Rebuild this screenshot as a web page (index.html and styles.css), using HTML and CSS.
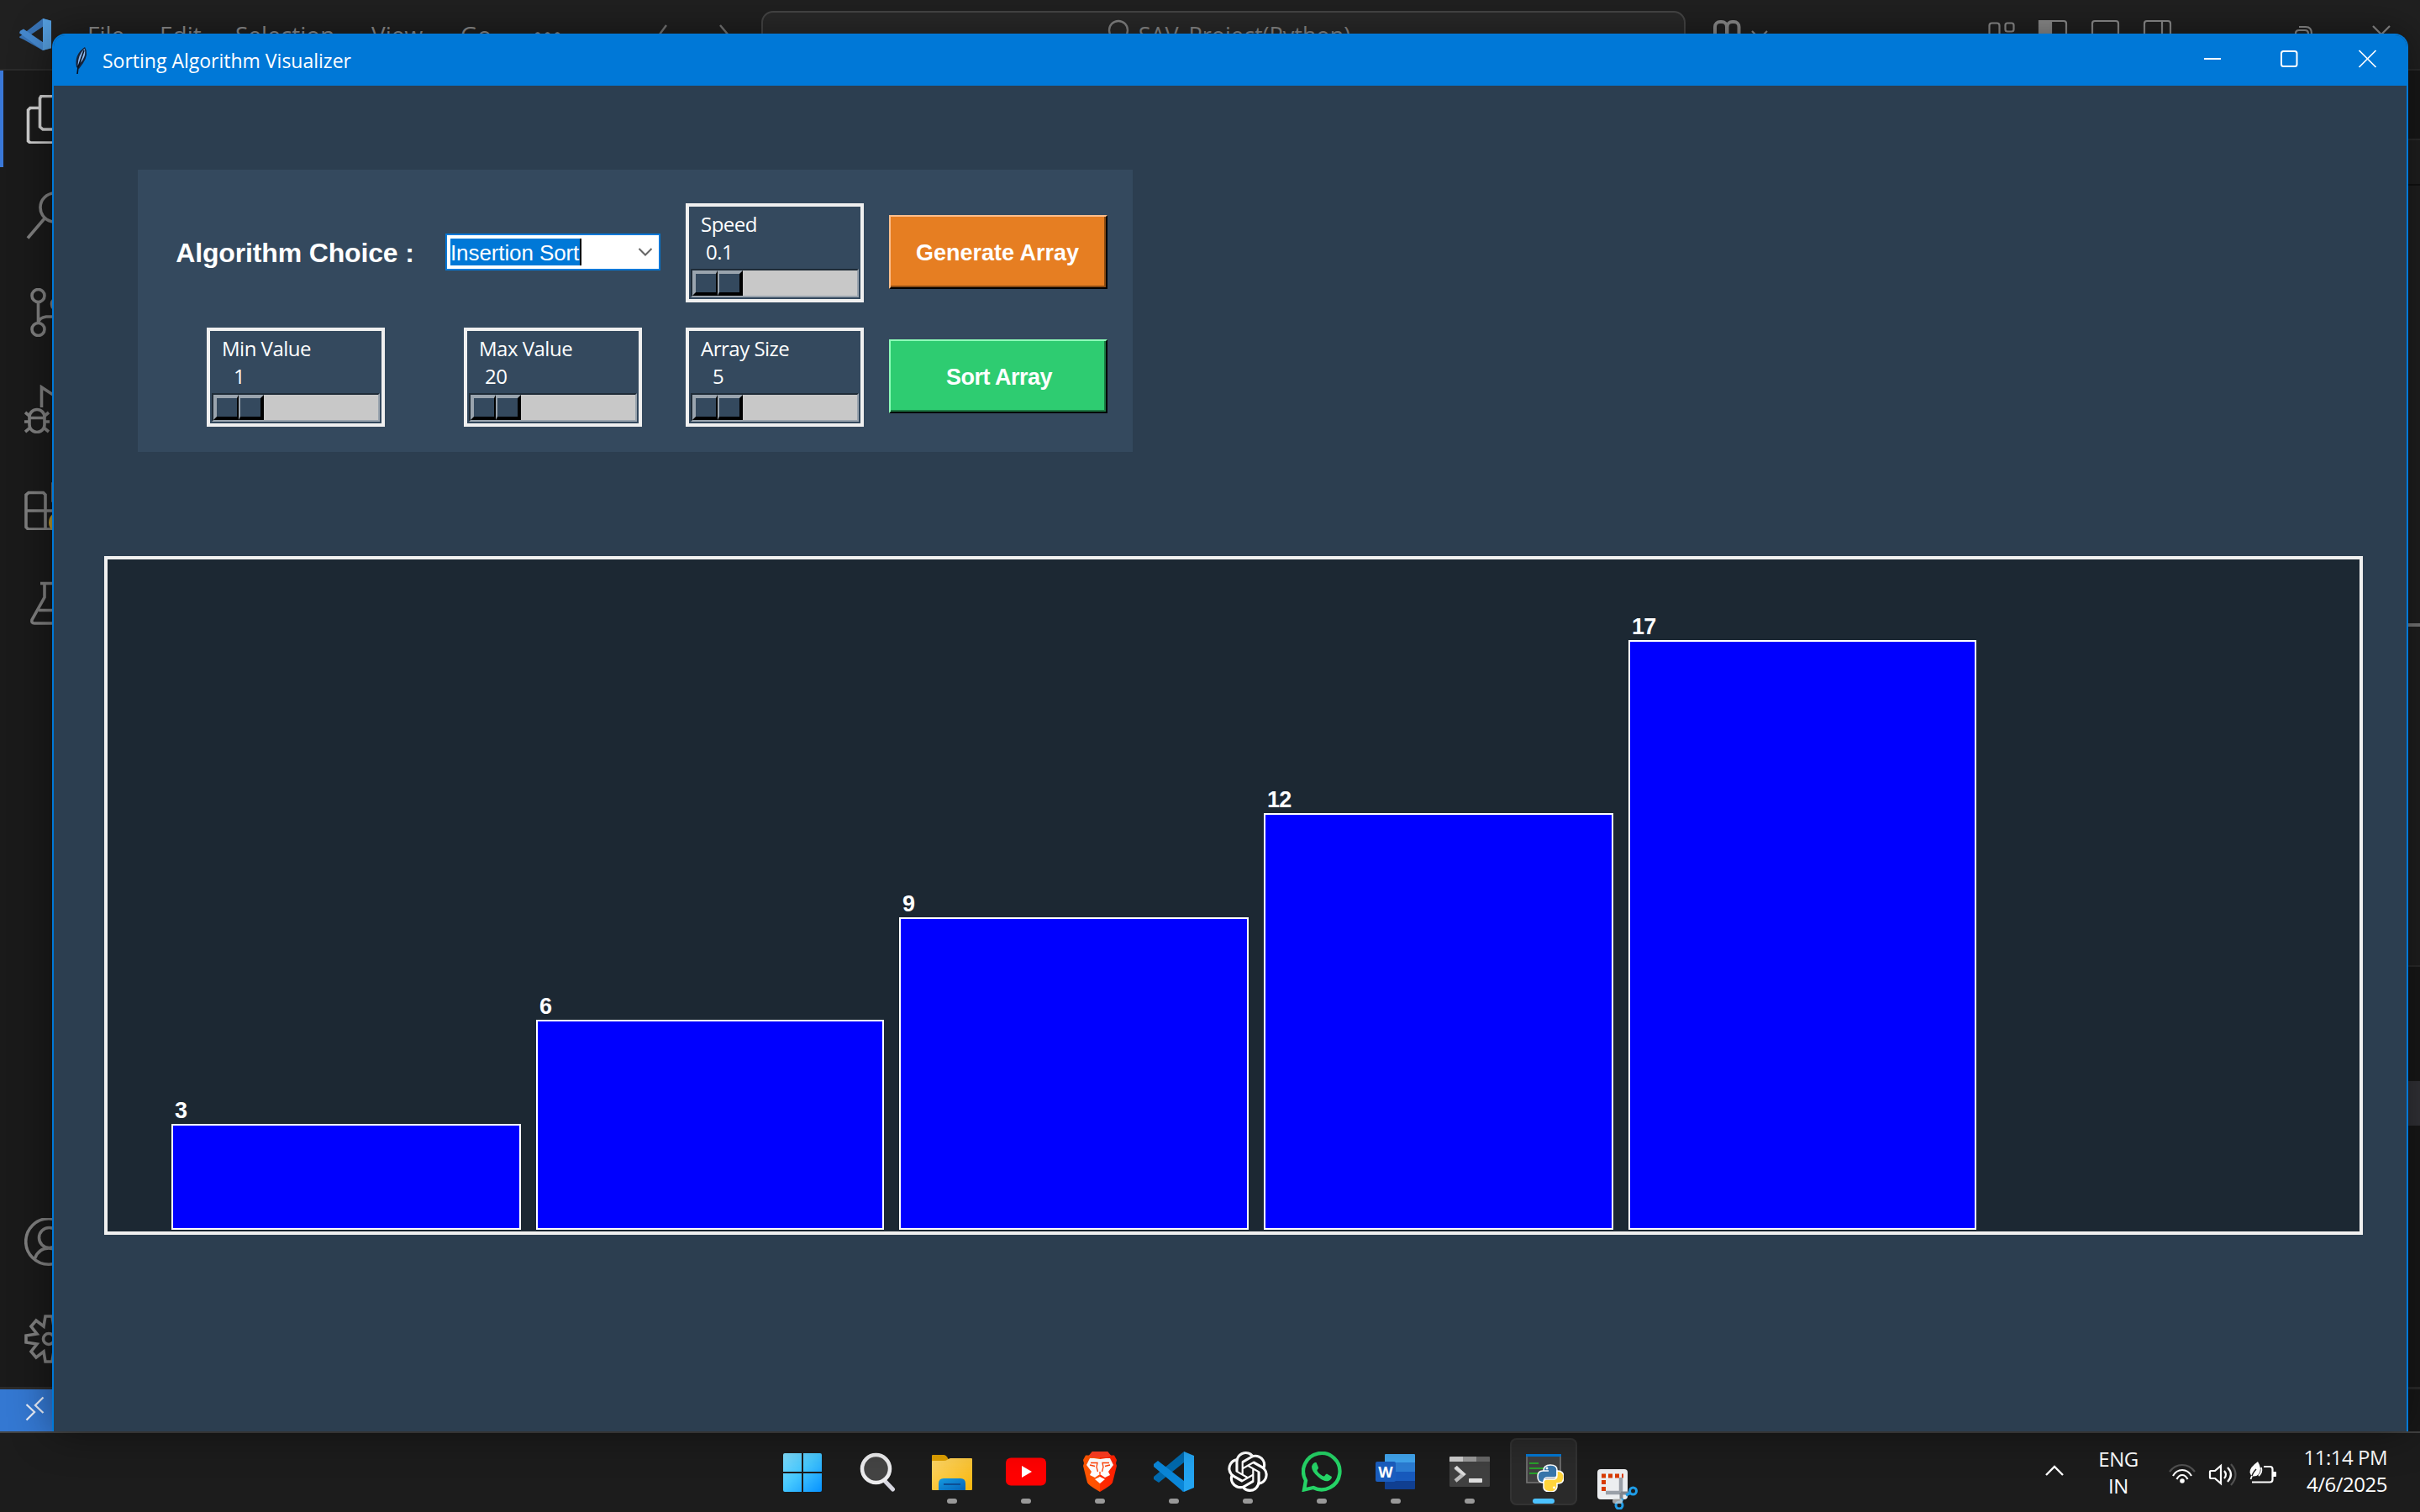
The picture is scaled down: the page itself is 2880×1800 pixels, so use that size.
FILE: index.html
```html
<!DOCTYPE html>
<html lang="en">
<head>
<meta charset="utf-8">
<title>Sorting Algorithm Visualizer</title>
<link rel="stylesheet" href="styles.css">
</head>
<body>
<div class="desktop">

  <div class="editor">
    <header class="editor-top">
      <svg class="logo" width="38" height="38" viewBox="0 0 38 70" preserveAspectRatio="none"><path d="M28 0 38 5V65L28 70 1 42 0 40 5 34 28 52V18L5 46 0 42 1 39 Z" fill="#3873b5"/><path d="M1 27 5 23 28 52V70L0 32Z" fill="#4689cf"/><path d="M28 0 38 5V65L28 70Z" fill="#559fe0"/></svg>
      <nav class="menu"><span class="m-file">File</span><span class="m-edit">Edit</span><span class="m-sel">Selection</span><span class="m-view">View</span><span class="m-go">Go</span><span class="m-more">···</span></nav>
      <svg class="arrows" width="90" height="40" viewBox="0 0 90 40"><path d="M12 1-2 20 M76 1 92 20" fill="none" stroke="#777" stroke-width="2.4"/></svg>
      <div class="command"><svg width="30" height="36" viewBox="0 0 30 36"><circle cx="14" cy="14" r="11" fill="none" stroke="#858585" stroke-width="2.4"/></svg><span>SAV_Project(Python)</span></div>
      <svg class="tools" width="880" height="40" viewBox="0 0 880 40" fill="none" stroke="#8c8c8c" stroke-width="2.2">
        <g stroke-width="4"><rect x="41" y="26" width="14" height="20" rx="6"/><rect x="55.500" y="26" width="14" height="20" rx="6"/></g>
        <path d="M85 37l9 9 9-9"/>
        <rect x="367.500" y="27.500" width="12" height="26" rx="3"/><rect x="386.500" y="27.500" width="10" height="10" rx="2.500"/>
        <rect x="428" y="25" width="31" height="30" rx="3"/><path d="M427 25h14v20h-14z" fill="#8c8c8c"/>
        <rect x="490" y="25" width="31" height="30" rx="3"/>
        <rect x="552" y="25" width="31" height="30" rx="3"/><path d="M573 25v20"/>
        <path d="M732 45v-5q0-4 4-4h7q4 0 4 4M736 32h8q7 0 7 8"/>
        <path d="M824 31l20 20M844 31l-20 20"/>
      </svg>
    </header>
    <div class="editor-mid">
      <aside class="activity">
        <div class="act on"><svg width="58" height="58" viewBox="0 0 58 58"><path d="M20 1.500h30v39.500H22l-3.500-3V4zM18.500 15.500H7L4.500 18v37L7 57h34" stroke="#d0d0d0"/></svg></div>
        <div class="act"><svg width="58" height="58" viewBox="0 0 58 58"><circle cx="36" cy="19" r="17"/><path d="M24.500 31.500 4 55.500"/></svg></div>
        <div class="act"><svg width="58" height="58" viewBox="0 0 58 58"><circle cx="16.500" cy="9" r="7.500"/><circle cx="16.500" cy="49" r="7.500"/><circle cx="40" cy="19" r="7.500"/><path d="M16.500 17v24Q18 35 26 34h8"/></svg></div>
        <div class="act"><svg width="58" height="58" viewBox="0 0 58 58"><path d="M20.500 27V3L54 25 35 37"/><rect x="6" y="29.500" width="18" height="27" rx="9"/><path d="M6 39.500h18M0 44h6m18 0h6M1 33l6 5m22-5-6 5M1 56l6-5m22 5-6-5"/></svg></div>
        <div class="act"><svg width="58" height="58" viewBox="0 0 58 58"><path d="M5 13.500h17.500L25 16v41H4.500L2 54.500V16zM2 35h45v22H25M34 3h20v20H34z"/><circle cx="42" cy="49" r="13" fill="#b8952f" stroke="none"/></svg></div>
        <div class="act"><svg width="58" height="58" viewBox="0 0 58 58"><path d="M19 6.500h28M24 6.500V23L9 50q-1 4 3 4h42M17 38.500h26"/></svg></div>
        <div class="act push"><svg width="58" height="58" viewBox="0 0 58 58"><circle cx="29" cy="28" r="27.300"/><circle cx="29.500" cy="23.500" r="12"/><path d="M12.500 48Q17 36 29 36t17 12"/></svg></div>
        <div class="act"><svg width="58" height="58" viewBox="0 0 58 58"><path d="M25 2h8l2 12 9-7 6 7-7 9 13 2v8l-13 2 7 9-6 7-9-7-2 12h-8l-2-12-9 7-6-7 7-9-13-2v-8l13-2-7-9 6-7 9 7z"/><circle cx="29" cy="29" r="6.500"/></svg></div>
      </aside>
      <aside class="edge"><i class="e1"></i><i class="e2"></i><i class="e3"></i><i class="e4"></i><i class="e5"></i><i class="e6"></i></aside>
    </div>
    <footer class="status"><div class="remote"><svg width="24" height="32" viewBox="0 0 24 32"><path d="M1.500 11 11 20 1.500 29.500M21.500 2.500 12 12l9.500 9" fill="none" stroke="#e8eefa" stroke-width="2.300"/></svg></div></footer>
  </div>

  <main class="window">
    <header class="titlebar">
      <svg class="feather" width="20" height="34" viewBox="0 0 20 34"><path d="M15 1Q20 9 13 20L8 27 5 25Q2 10 15 1Z" fill="#16233a"/><path d="M14.500 3Q7 10 6.500 23L12 17Q17 9 14.500 3Z" fill="#8db8ee"/><path d="M14 5 7 25 6 33" fill="none" stroke="#07101e" stroke-width="1.600"/></svg>
      <h1>Sorting Algorithm Visualizer</h1>
      <svg class="controls" width="206" height="24" viewBox="0 0 206 24" fill="none" stroke="#fff" stroke-width="2"><path d="M0 12h20"/><rect x="92" y="3" width="18.500" height="18" rx="2.500"/><path d="M184.500 2l20 20M204.500 2l-20 20" stroke-width="1.700"/></svg>
    </header>

    <section class="panel">
      <label class="algo">Algorithm Choice :</label>
      <div class="combo"><span>Insertion Sort</span><svg width="18" height="12" viewBox="0 0 18 12"><path d="M1.500 2 9 9.500 16.500 2" fill="none" stroke="#666" stroke-width="2"/></svg></div>
      <div class="scale"><span>Speed</span><b class="v-speed">0.1</b><div class="trough"><i></i><i></i></div></div>
      <button class="btn orange">Generate Array</button>
      <div class="scale"><span>Min Value</span><b class="v-min">1</b><div class="trough"><i></i><i></i></div></div>
      <div class="scale"><span>Max Value</span><b class="v-max">20</b><div class="trough"><i></i><i></i></div></div>
      <div class="scale"><span>Array Size</span><b class="v-size">5</b><div class="trough"><i></i><i></i></div></div>
      <button class="btn green">Sort Array</button>
    </section>

    <section class="canvas">
      <div class="item"><span>3</span><div class="bar" style="width:416px;height:126px"></div></div>
      <div class="item"><span>6</span><div class="bar" style="width:414px;height:250px"></div></div>
      <div class="item"><span>9</span><div class="bar" style="width:416px;height:372px"></div></div>
      <div class="item"><span>12</span><div class="bar" style="width:416px;height:496px"></div></div>
      <div class="item"><span>17</span><div class="bar" style="width:414px;height:702px"></div></div>
    </section>
  </main>

  <footer class="taskbar">
    <div class="apps">
      <div class="app start"><svg width="48" height="48" viewBox="0 0 48 48"><defs><linearGradient id="win" x1="0" y1="0" x2="46" y2="46" gradientUnits="userSpaceOnUse"><stop offset="0" stop-color="#86e0fd"/><stop offset=".5" stop-color="#45c8ff"/><stop offset="1" stop-color="#0a95ff"/></linearGradient></defs><path d="M3 2H23V24H1V4Q1 2 3 2ZM25 2H45Q47 2 47 4V24H25ZM1 26H23V48H3Q1 48 1 46ZM25 26H47V46Q47 48 45 48H25Z" fill="url(#win)"/></svg></div>
      <div class="app"><svg width="48" height="48" viewBox="0 0 48 48"><path d="M31 34 41.500 45" stroke="#d6d6df" stroke-width="5" stroke-linecap="round"/><circle cx="21.500" cy="20.500" r="16.500" fill="#444" stroke="#ececee" stroke-width="4.500"/></svg></div>
      <div class="app run"><svg width="48" height="48" viewBox="0 0 48 48"><defs><linearGradient id="fo" x1="0" y1="0" x2="1" y2="1"><stop offset="0" stop-color="#ffd869"/><stop offset="1" stop-color="#f7b50c"/></linearGradient><linearGradient id="fb" x1="0" y1="0" x2="1" y2="1"><stop offset="0" stop-color="#169be0"/><stop offset="1" stop-color="#0563b8"/></linearGradient></defs><path d="M0 5q0-1 1-1h13q3 0 5 4l2 4H0z" fill="#dfa000"/><path d="M0 12q0-1 1-1h13q3 0 4-1t4-2h25q1 0 1 1v36q0 1-1 1H1q-1 0-1-1z" fill="url(#fo)"/><path d="M8 46V38q0-6 6-6h20q6 0 6 6v8z" fill="url(#fb)"/><path d="M14 39h20" stroke="#0c4e94" stroke-width="2"/></svg></div>
      <div class="app run"><svg width="48" height="48" viewBox="0 0 48 48"><rect y="7.500" width="48" height="33" rx="6" fill="#f00"/><path d="M19 17 31 24 19 31Z" fill="#fff"/></svg></div>
      <div class="app run"><svg width="48" height="48" viewBox="0 0 48 48"><defs><linearGradient id="br"><stop offset="0" stop-color="#ff5601"/><stop offset=".5" stop-color="#ff5000"/><stop offset=".51" stop-color="#ff2c00"/><stop offset="1" stop-color="#ff1f00"/></linearGradient></defs><path d="M15 0H33L37 4.500H41L44 10 43 14 44 17 39 37Q38 40 24 48 10 40 9 37L4 17 5 14 4 10 7 4.500H11Z" fill="url(#br)"/><path d="M15 0H33L37 5 33 7H15L11 5Z" fill="#ff3d22"/><path d="M24 9 31 8 36 8 40 16 34 24 36 28 30 31 24 27 18 31 12 28 14 24 8 16 12 8 17 8ZM24 30 30 33 24 38 18 33Z" fill="#fff"/><path d="M13 13.500l8 0-1 5 1.500 5.500M35 13.500l-8 0 1 5-1.500 5.500M12 16l6 1.500M36 16l-6 1.500M24 24v3" fill="none" stroke="#ff4206" stroke-width="1.300"/></svg></div>
      <div class="app run"><svg width="48" height="48" viewBox="0 0 48 48"><path d="M36 0V13L6 37 0 33V30Z" fill="#0069ad"/><path d="M0 15 5 11 36 35V48Q34 48 33 46L0 18Z" fill="#0a86d8"/><path d="M36 0 48 5V43L36 48Z" fill="#23a4f1"/></svg></div>
      <div class="app run"><svg width="48" height="48" viewBox="0 0 24 24"><path fill="#fff" d="M22.2819 9.8211a5.9847 5.9847 0 0 0-.5157-4.9108 6.0462 6.0462 0 0 0-6.5098-2.9A6.0651 6.0651 0 0 0 4.9807 4.1818a5.9847 5.9847 0 0 0-3.9977 2.9 6.0462 6.0462 0 0 0 .7427 7.0966 5.98 5.98 0 0 0 .511 4.9107 6.051 6.051 0 0 0 6.5146 2.9001A5.9847 5.9847 0 0 0 13.2599 24a6.0557 6.0557 0 0 0 5.7718-4.2058 5.9894 5.9894 0 0 0 3.9977-2.9001 6.0557 6.0557 0 0 0-.7475-7.0729zm-9.022 12.6081a4.4755 4.4755 0 0 1-2.8764-1.0408l.1419-.0804 4.7783-2.7582a.7948.7948 0 0 0 .3927-.6813v-6.7369l2.02 1.1686a.071.071 0 0 1 .038.052v5.5826a4.504 4.504 0 0 1-4.4945 4.4944zm-9.6607-4.1254a4.4708 4.4708 0 0 1-.5346-3.0137l.142.0852 4.783 2.7582a.7712.7712 0 0 0 .7806 0l5.8428-3.3685v2.3324a.0804.0804 0 0 1-.0332.0615L9.74 19.9502a4.4992 4.4992 0 0 1-6.1408-1.6464zM2.3408 7.8956a4.485 4.485 0 0 1 2.3655-1.9728V11.6a.7664.7664 0 0 0 .3879.6765l5.8144 3.3543-2.0201 1.1685a.0757.0757 0 0 1-.071 0l-4.8303-2.7865A4.504 4.504 0 0 1 2.3408 7.872zm16.5963 3.8558L13.1038 8.364 15.1192 7.2a.0757.0757 0 0 1 .071 0l4.8303 2.7913a4.4944 4.4944 0 0 1-.6765 8.1042v-5.6772a.79.79 0 0 0-.407-.667zm2.0107-3.0231l-.142-.0852-4.7735-2.7818a.7759.7759 0 0 0-.7854 0L9.409 9.2297V6.8974a.0662.0662 0 0 1 .0284-.0615l4.8303-2.7866a4.4992 4.4992 0 0 1 6.6802 4.66zM8.3065 12.863l-2.02-1.1638a.0804.0804 0 0 1-.038-.0567V6.0742a4.4992 4.4992 0 0 1 7.3757-3.4537l-.142.0805L8.704 5.459a.7948.7948 0 0 0-.3927.6813zm1.0976-2.3654l2.602-1.4998 2.6069 1.4998v2.9994l-2.5974 1.4997-2.6067-1.4997Z"/></svg></div>
      <div class="app run"><svg width="48" height="48" viewBox="0 0 48 48"><path d="M5 34.500A21.700 21.700 0 1 1 14 43L3 45.500Z" fill="none" stroke="#25d366" stroke-width="4.300"/><path d="M16 13q-3 1-4 5 0 6 8 12.500 7 6 12 4.500 4-2 4-5l-6-3.500q-1 0-3 3-1 .5-5-2.500-4-3.500-3.500-5 2-2 1.500-3l-2.500-6z" fill="#25d366"/></svg></div>
      <div class="app run"><svg width="48" height="48" viewBox="0 0 48 48"><path d="M12 3H46q1 0 1 1V13H11V4q0-1 1-1" fill="#41a5ee"/><path d="M11 13h36v11H11z" fill="#2b7cd3"/><path d="M11 24h36v11H11z" fill="#185abd"/><path d="M11 35h36v9q0 1-1 1H12q-1 0-1-1z" fill="#103f91"/><rect x="0" y="12" width="24" height="24" rx="2" fill="#1a5dbe"/><text x="12" y="31" text-anchor="middle" font-family="Open Sans, sans-serif" font-size="18" font-weight="700" fill="#fff">W</text></svg></div>
      <div class="app run"><svg width="48" height="48" viewBox="0 0 48 48"><rect y="6" width="48" height="36" rx="1.500" fill="#404040"/><path d="M1 6h15v6H0V7q0-1 1-1" fill="#ccc"/><path d="M16 6h16v6H16z" fill="#999"/><path d="M32 6h15q1 0 1 1v5H32z" fill="#666"/><path d="M7 19 16.500 27 7 35" fill="none" stroke="#bbb" stroke-width="4.500"/><path d="M5.500 19.500 9 17 19 27l-2 2z" fill="#ddd"/><rect x="23" y="32" width="16" height="5" rx=".8" fill="#ddd"/></svg></div>
      <div class="app run active"><svg width="48" height="48" viewBox="0 0 48 48"><path d="M4 4h40v33H4z" fill="#404040" stroke="#777" stroke-width="1.600"/><path d="M3 3h42v3H3z" fill="#0078d4"/><path d="M7 14h11M7 20h20M7 26h12" stroke="#28a02a" stroke-width="2"/><g stroke="#fff" stroke-width="1.500"><path d="M24 23q0-7 8-7t8 6v6q0 3-4 3h-8q-4 0-4 6-7 0-7-7t6-7h7" fill="#3876ab"/><path d="M40 23q8 0 8 7.500t-7 7.500h-1v4q-1 6-8 6t-8-5v-6q0-4 4-4h8q4 0 4-5z" fill="#ffd43b"/></g><circle cx="28" cy="20" r="1.400" fill="#fff"/><circle cx="36.500" cy="43" r="1.400" fill="#fff"/></svg></div>
      <div class="app run snip"><svg width="48" height="48" viewBox="0 0 48 48"><rect x="0" width="36" height="36" rx="4" fill="#eceef0"/><path d="M5 8h26M7.500 13v14" fill="none" stroke="#d83b01" stroke-width="5" stroke-dasharray="5 3"/><path d="M28 10v20M10 28h20" stroke="#9aa0a8" stroke-width="4.500"/><path d="M28.500 28v8M28 28.500h10" stroke="#80868e" stroke-width="4"/><circle cx="42.500" cy="26" r="4" fill="none" stroke="#1f9ce6" stroke-width="3"/><circle cx="26" cy="43" r="4" fill="none" stroke="#1f9ce6" stroke-width="3"/><path d="M34 31l6-3M28 39l2-4" stroke="#1f9ce6" stroke-width="3.500"/></svg></div>
    </div>
    <div class="tray">
      <svg class="up" width="24" height="16" viewBox="0 0 24 16"><path d="M2 13 12 3 22 13" fill="none" stroke="#fff" stroke-width="2.400"/></svg>
      <div class="lang"><span>ENG</span><span>IN</span></div>
      <svg class="sys" width="130" height="32" viewBox="0 0 130 32" fill="none" stroke="#fff" stroke-width="2.200">
        <path d="M1 13Q7 5 16 5t15 8" stroke="#505050"/><path d="M5 18Q9 11 16 11t11 7M9.500 22Q12 17 16 17t6.500 5"/><circle cx="16" cy="24" r="2.800" fill="#fff" stroke="none"/>
        <path d="M50 12h5l7-6v21l-7-6h-5q-1 0-1-1v-7q0-1 1-1z"/><path d="M66 12q4 4.500 0 9M70 8q8 8.500 0 17"/><path d="M74 4q11 12.500 0 25" stroke="#505050"/>
        <path d="M113 7h7.500q3 0 3 3v12.500q0 3-3 3H99"/><path d="M124 13.500h3.500v5H124z" fill="#fff" stroke-width="1"/><path d="M106 1Q96 8 96.500 14 97 17 100 18.500 109 19 109 9 108 4 106 1Z" fill="#fff" stroke="none"/><path d="M98 22Q99 15 104 10" stroke="#1c1c1c" stroke-width="1.500"/><path d="M97.500 22l1.500-4M110 8q1.500 6-3 10" stroke-width="1.800"/>
      </svg>
      <div class="clock"><span>11:14 PM</span><span>4/6/2025</span></div>
    </div>
  </footer>
</div>
</body>
</html>
```
FILE: styles.css
```css
* { box-sizing: border-box; }
body { margin: 0; background: #1c1c1c; font-family: "Open Sans", "Noto Sans", sans-serif; }
svg { display: block; flex: none; }
.desktop { position: relative; width: 2880px; height: 1800px; overflow: hidden; display: flex; flex-direction: column; }

/* editor in the background */
.editor { height: 1704px; display: flex; flex-direction: column; background: #1f1f1f; }
.editor-top { height: 84px; display: flex; align-items: flex-start; border-bottom: 2px solid #2b2b2b; background: #202020; overflow: hidden; }
.logo { margin: 22px 0 0 23px; }
.menu { display: flex; width: 659px; height: 60px; padding: 20px 0 0 43px; color: #8f8f8f; font-size: 28px; line-height: 42px; white-space: nowrap; }
.menu span { flex: none; }
.m-file { width: 86px; }
.m-edit { width: 90px; }
.m-sel { width: 162px; }
.m-view { width: 106px; }
.m-go { width: 87px; }
.menu .m-more { font-size: 34px; font-weight: 700; letter-spacing: 2px; line-height: 40px; }
.arrows { margin: 29px 0 0 61px; }
.command { width: 1100px; height: 64px; margin: 13px 0 0 35px; border: 2px solid #454545; border-radius: 14px; background: #292929; display: flex; justify-content: center; padding: 7px 0 0 12px; color: #8c8c8c; font-size: 27px; line-height: 42px; }
.command span { margin: -1px 0 0 8px; }
.tools { margin-left: -6px; }
.editor-mid { height: 1570px; display: flex; justify-content: space-between; border-bottom: 3px solid #2b2b2b; }
.activity { width: 115px; background: #1a1a1a; display: flex; flex-direction: column; }
.act { height: 115px; display: flex; align-items: center; justify-content: center; }
.act svg { fill: none; stroke: #808080; stroke-width: 3.6; }
.act.on { border-left: 4px solid #3a78d8; padding-right: 4px; }
.push { margin-top: auto; }
.edge { width: 30px; display: flex; flex-direction: column; background: #1f1f1f; }
.e1 { height: 83px; background: #181818; border-bottom: 2px solid #2b2b2b; }
.e2 { height: 54px; border-bottom: 2px solid #111; }
.e3 { height: 525px; border-bottom: 4px solid #777; }
.e4 { height: 405px; border-bottom: 2px solid #2b2b2b; }
.e5 { height: 136px; background: #181818; }
.e6 { flex: 1; background: #181818; border-top: 53px solid #323237; }
.status { height: 50px; background: #181818; }
.remote { width: 90px; height: 50px; background: #3478d2; padding: 7px 0 0 30px; }

/* application window */
.window { position: absolute; left: 62px; top: 40px; width: 2804px; height: 1664px; border: 2px solid #0078d7; border-bottom: 0; border-radius: 16px 16px 0 0; background: #2c3e50; box-shadow: 0 0 50px rgba(0,0,0,.45); overflow: hidden; display: flex; flex-direction: column; }
.titlebar { height: 60px; background: #0078d7; display: flex; align-items: center; padding: 0 35px 0 22px; color: #fff; }
.titlebar h1 { margin: 0 0 1px 16px; font-size: 23px; font-weight: 400; line-height: 34px; }
.controls { margin: 0 0 4px auto; }
.panel { width: 1184px; height: 336px; margin: 100px 0 0 100px; padding: 25px 20px 15px; background: #34495e; display: grid; grid-template-columns: 336px 276px 252px 280px; grid-template-rows: 148px 148px; place-items: center; color: #fff; }
.algo { margin-right: 2px; font: 700 32px/36px "Liberation Sans", Arial, sans-serif; letter-spacing: -.15px; white-space: nowrap; }
.combo { width: 256px; height: 44px; margin-bottom: 2px; border: 2px solid #0078d7; background: #fff; display: flex; align-items: center; justify-content: space-between; padding: 0 7px 0 4px; }
.combo span { width: 156px; height: 32px; background: #0078d7; border-right: 2px solid #000; font: 26px/35px "Liberation Sans", Arial, sans-serif; letter-spacing: -.1px; white-space: nowrap; }
.scale { width: 212px; height: 118px; border: 4px solid #f0f0f0; padding: 4px 2px 2px; display: flex; flex-direction: column; font-size: 24px; line-height: 33px; }
.scale span { padding-left: 12px; letter-spacing: -.5px; }
.scale b { font-weight: 400; line-height: 34px; letter-spacing: -.5px; }
.v-speed { padding-left: 18px; }
.v-min, .v-size { padding-left: 26px; }
.v-max { padding-left: 19px; }
.trough { height: 34px; margin-top: auto; border: 2px solid; border-color: #1f2c38 #9aa4ae #9aa4ae #1f2c38; background: #c8c8c8; display: flex; }
.trough i { width: 30px; height: 30px; background: #34495e; border: 4px solid; border-color: #9aa4ae #000 #000 #9aa4ae; }
.trough i:first-child { border-right-width: 2px; }
.trough i:last-child { border-left-width: 2px; }
.btn { width: 260px; height: 88px; margin: 0 0 2px; padding: 2px 2px 0 0; color: #fff; font: 700 27px/32px "Liberation Sans", Arial, sans-serif; border: 2px solid; }
.orange { background: #e67e22; border-color: #ffbe8c #000 #000 #ffbe8c; box-shadow: inset -2px -2px #8a4c14; }
.green { padding: 2px 0 0 2px; letter-spacing: -.5px; background: #2ecc71; border-color: #8dffb8 #000 #000 #8dffb8; box-shadow: inset -2px -2px #1c7a44; }
.canvas { width: 2688px; height: 808px; margin: 124px 0 0 60px; border: 4px solid #f0f0f0; background: #1c2833; padding: 0 0 2px 76px; display: flex; align-items: flex-end; gap: 18px; color: #fff; }
.item { display: flex; flex-direction: column; }
.item span { font: 700 27px/32px "Liberation Sans", Arial, sans-serif; letter-spacing: -.8px; padding-left: 4px; }
.bar { background: #00f; border: 2px solid #fff; }

/* taskbar */
.taskbar { height: 96px; background: #1c1c1c; border-top: 2px solid #434343; display: flex; justify-content: space-between; }
.apps { display: flex; padding-left: 911px; }
.app { width: 88px; height: 94px; display: flex; flex-direction: column; align-items: center; padding-top: 22px; }
.app.start { margin-right: 2px; }
.app.run::after { content: ""; width: 12px; height: 6px; margin-top: 8px; border-radius: 3px; background: #999; flex: none; }
.app.active { width: 80px; height: 80px; margin: 6px 4px 0; padding-top: 16px; border-radius: 8px; background: #2a2a2a; box-shadow: inset 0 0 0 2px #333; }
.app.active::after { width: 26px; background: #4cc2ff; }
.app.snip { padding-top: 43px; }
.app.snip::after { margin-top: -13px; opacity: .75; background: #ccc; }
.tray { display: flex; align-items: flex-start; color: #fff; font-size: 24px; line-height: 32px; padding-right: 39px; }
.tray span { display: block; letter-spacing: -.5px; white-space: nowrap; }
.up { margin: 37px 29px 0 0; }
.lang { width: 70px; padding-top: 15px; text-align: center; }
.sys { margin: 33px 30px 0 25px; }
.clock { width: 100px; padding-top: 13px; text-align: right; }
```
